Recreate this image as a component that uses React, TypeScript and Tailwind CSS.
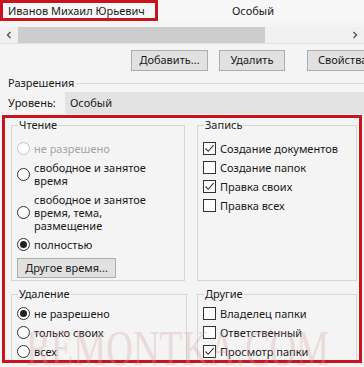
import React from "react";

const FONT = { fontFamily: '"Noto Sans", "Open Sans", sans-serif' };

function Radio({ checked, disabled }: { checked?: boolean; disabled?: boolean }) {
  return (
    <span
      className={
        "flex h-[13px] w-[13px] shrink-0 items-center justify-center rounded-full border bg-[#fdfdfd] " +
        (disabled ? "border-[#c4c4c4]" : "border-[#333333]")
      }
    >
      {checked ? <span className="h-[7px] w-[7px] rounded-full bg-[#222222]" /> : null}
    </span>
  );
}

function Check({ checked }: { checked?: boolean }) {
  return (
    <span className="flex h-[13px] w-[13px] shrink-0 items-center justify-center border border-[#333333] bg-[#fdfdfd]">
      {checked ? (
        <svg width="11" height="11" viewBox="0 0 11 11">
          <path d="M1.5 5.5 L4.2 8.3 L9.6 2.2" fill="none" stroke="#333" strokeWidth="1.1" />
        </svg>
      ) : null}
    </span>
  );
}

function RadioItem({ lines, checked, disabled }: { lines: string[]; checked?: boolean; disabled?: boolean }) {
  return (
    <div className="flex items-center gap-[4px]">
      <Radio checked={checked} disabled={disabled} />
      <div className={"flex flex-col leading-[13px] " + (disabled ? "text-[#a6a6a6]" : "")}>
        {lines.map((l) => (
          <span key={l} className="whitespace-nowrap">{l}</span>
        ))}
      </div>
    </div>
  );
}

function CheckItem({ label, checked }: { label: string; checked?: boolean }) {
  return (
    <div className="flex items-center gap-[4px] leading-[13px]">
      <Check checked={checked} />
      <span className="whitespace-nowrap">{label}</span>
    </div>
  );
}

function Group({ title, className, children }: { title: string; className: string; children: React.ReactNode }) {
  return (
    <fieldset className={"border border-[#d6d6d6] px-[5px] " + className}>
      <legend className="ml-[1px] px-[1px] leading-[14px]">{title}</legend>
      {children}
    </fieldset>
  );
}

export default function App() {
  return (
    <div
      className="relative h-[367px] w-[364px] overflow-hidden bg-[#f4f4f4] text-[11px] text-[#1a1a1a]"
      style={FONT}
    >
      {/* header */}
      <div className="flex h-[21px] items-center bg-[#f7f7f7]">
        <div className="flex h-[21px] w-[158px] shrink-0 items-center whitespace-nowrap border-[3px] border-[#c8141e] pl-[5px] text-[11px] leading-[14px]">
          Иванов Михаил Юрьевич
        </div>
        <span className="ml-[74px] leading-[14px]">Особый</span>
      </div>

      {/* scrollbar */}
      <div className="mt-[6px] flex h-[16px] items-center bg-[#f0f0f0]">
        <div className="flex w-[18px] items-center justify-center">
          <svg width="8" height="8" viewBox="0 0 8 8">
            <path d="M5.5 1 L2.5 4 L5.5 7" fill="none" stroke="#555" strokeWidth="1.4" />
          </svg>
        </div>
        <div className="h-[16px] w-[247px] bg-[#cdcdcd]" />
        <div className="flex-1" />
        <div className="flex w-[18px] items-center justify-center">
          <svg width="8" height="8" viewBox="0 0 8 8">
            <path d="M2.5 1 L5.5 4 L2.5 7" fill="none" stroke="#555" strokeWidth="1.4" />
          </svg>
        </div>
      </div>
      <div className="h-px bg-[#e2e2e2]" />

      {/* buttons */}
      <div className="mt-[6px] flex h-[21px] items-center">
        <div className="ml-[131px] flex h-[21px] w-[77px] shrink-0 items-center justify-center border border-[#adadad] bg-[#e1e1e1]">
          Добавить...
        </div>
        <div className="ml-[11px] flex h-[21px] w-[66px] shrink-0 items-center justify-center border border-[#adadad] bg-[#e1e1e1]">
          Удалить
        </div>
        <div className="ml-[22px] flex h-[21px] w-[70px] shrink-0 items-center justify-start border border-[#adadad] bg-[#e1e1e1] pl-[10px]">
          Свойства
        </div>
      </div>

      {/* Разрешения */}
      <div className="mt-[5px] flex h-[14px] items-center">
        <span className="pl-[8px] pr-[2px] leading-[14px]">Разрешения</span>
        <div className="h-px flex-1 bg-[#dadada]" />
      </div>

      {/* level */}
      <div className="mt-[2px] flex h-[22px] items-center">
        <span className="w-[65px] pl-[8px] leading-[14px]">Уровень:</span>
        <div className="flex h-[22px] flex-1 items-center bg-[#e3e3e3] pl-[5px] leading-[14px]">Особый</div>
      </div>

      {/* red box */}
      <div className="mx-[2px] mt-px h-[248px] overflow-hidden border-[3px] border-[#c8141e]">
        <div className="flex pl-[6px] pr-[2px]">
          <Group title="Чтение" className="h-[163px] w-[174px]">
            <div className="flex flex-col gap-[6px] pt-[10px]">
              <RadioItem lines={["не разрешено"]} disabled />
              <RadioItem lines={["свободное и занятое", "время"]} />
              <RadioItem lines={["свободное и занятое", "время, тема,", "размещение"]} />
              <RadioItem lines={["полностью"]} checked />
            </div>
            <div className="mt-[7px] flex h-[20px] w-[99px] items-center justify-center border border-[#adadad] bg-[#e1e1e1] leading-[14px]">
              Другое время...
            </div>
          </Group>
          <Group title="Запись" className="ml-[12px] h-[163px] flex-1">
            <div className="flex flex-col gap-[6px] pt-[10px]">
              <CheckItem label="Создание документов" checked />
              <CheckItem label="Создание папок" />
              <CheckItem label="Правка своих" checked />
              <CheckItem label="Правка всех" />
            </div>
          </Group>
        </div>
        <div className="mt-[6px] flex pl-[6px] pr-[2px]">
          <Group title="Удаление" className="h-[90px] w-[176px]">
            <div className="flex flex-col gap-[6px] pt-[6px]">
              <RadioItem lines={["не разрешено"]} checked />
              <RadioItem lines={["только своих"]} />
              <RadioItem lines={["всех"]} />
            </div>
          </Group>
          <Group title="Другие" className="ml-[10px] h-[90px] flex-1">
            <div className="flex flex-col gap-[6px] pt-[6px]">
              <CheckItem label="Владелец папки" />
              <CheckItem label="Ответственный" />
              <CheckItem label="Просмотр папки" checked />
            </div>
          </Group>
        </div>
      </div>

      {/* watermark */}
      <div
        className="pointer-events-none absolute left-[26px] top-[322px] origin-top-left scale-y-[1.35] whitespace-nowrap text-[37px] leading-[40px] text-[#d9a0a0] opacity-30"
        style={{ fontFamily: '"Liberation Serif", serif' }}
      >
        REMONTKA.COM
      </div>
    </div>
  );
}
